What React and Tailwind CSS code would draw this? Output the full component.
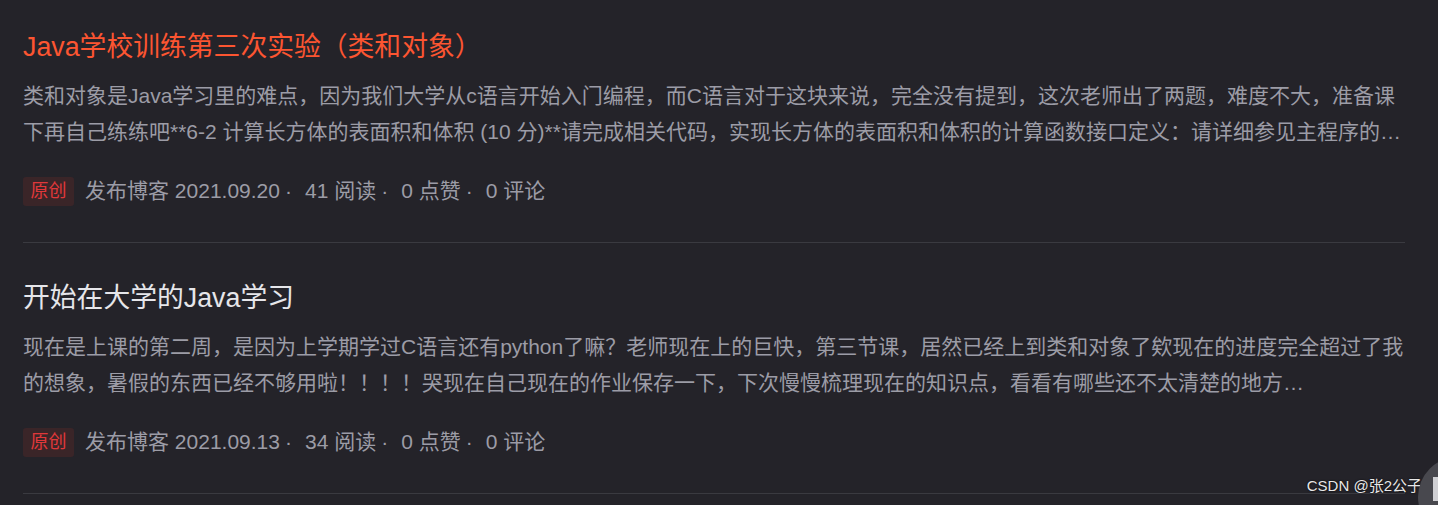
import React from 'react';

const posts = [
  {
    title: "Java学校训练第三次实验（类和对象）",
    active: true,
    desc: "类和对象是Java学习里的难点，因为我们大学从c语言开始入门编程，而C语言对于这块来说，完全没有提到，这次老师出了两题，难度不大，准备课下再自己练练吧**6-2 计算长方体的表面积和体积 (10 分)**请完成相关代码，实现长方体的表面积和体积的计算函数接口定义：请详细参见主程序的代码，根据调用情况，写出相关的类和函数",
    date: "2021.09.20",
    views: 41,
  },
  {
    title: "开始在大学的Java学习",
    active: false,
    desc: "现在是上课的第二周，是因为上学期学过C语言还有python了嘛？老师现在上的巨快，第三节课，居然已经上到类和对象了欸现在的进度完全超过了我的想象，暑假的东西已经不够用啦！！！！哭现在自己现在的作业保存一下，下次慢慢梳理现在的知识点，看看有哪些还不太清楚的地方…",
    date: "2021.09.13",
    views: 34,
  },
];

function PostItem({ post, first }) {
  return (
    <div className={`${first ? "pt-[30px]" : "pt-[38px]"} pb-[36px] border-b border-[#3a3a40]`}>
      <h4 className={`text-[26.8px] leading-[34px] ${post.active ? "text-[#fc5531]" : "text-[#e6e6ea]"}`}>
        {post.title}
      </h4>
      <p className="mt-[14px] text-[21px] leading-[36px] text-[#9c9ca6] line-clamp-2">
        {post.desc}
      </p>
      <div className="mt-[26px] flex items-center text-[21px] leading-[30px] text-[#9c9ca6]">
        <span className="h-[29px] w-[51px] rounded-[3px] bg-[#3a2528] text-[#e0383a] text-[18px] flex items-center justify-center">原创</span>
        <span className="ml-[11px]">发布博客 {post.date}</span>
        <span className="ml-[5px] mr-[13px]">·</span>
        <span>{post.views} 阅读</span>
        <span className="ml-[5px] mr-[13px]">·</span>
        <span>0 点赞</span>
        <span className="ml-[5px] mr-[13px]">·</span>
        <span>0 评论</span>
      </div>
    </div>
  );
}

export default function App() {
  return (
    <div
      className="relative w-[1438px] h-[505px] overflow-hidden bg-[#242329]"
      style={{ fontFamily: '"Liberation Sans", "Noto Sans CJK SC", sans-serif' }}
    >
      <div className="pl-[23px] pr-[33px]">
        {posts.map((p, i) => (
          <PostItem key={p.date} post={p} first={i === 0} />
        ))}
      </div>
      <div className="absolute right-[16px] bottom-[8px] text-[15px] text-[#e8e8e8] [text-shadow:0_0_2px_#000]">
        CSDN @张2公子
      </div>
      <div className="absolute left-[1418px] top-[457px] w-[80px] h-[80px] rounded-full bg-[#48484e] flex items-start pt-[20px] pl-[15px]">
        <div className="w-[5px] h-[24px] bg-[#d0d0d4]" />
      </div>
    </div>
  );
}
